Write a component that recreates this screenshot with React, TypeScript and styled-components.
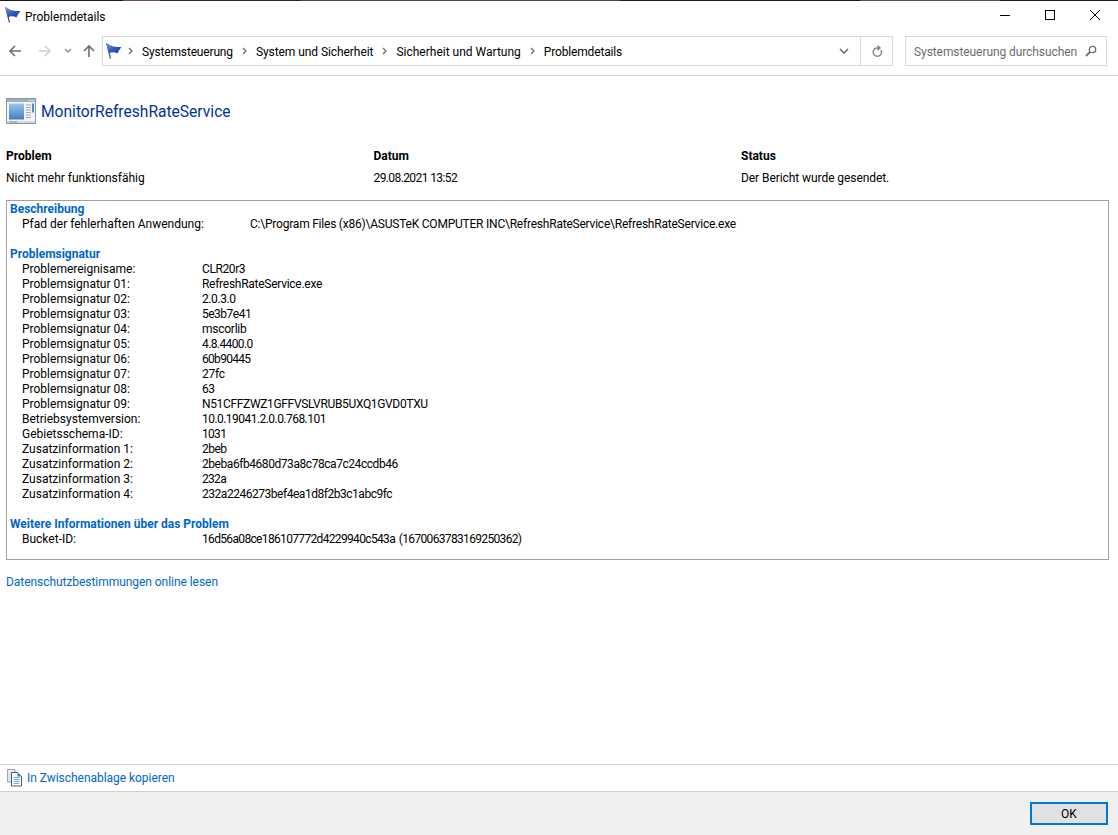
import styled, {createGlobalStyle} from 'styled-components';

const signatureRows: [string, string, number][] = [
    ['Problemereignisame:', 'CLR20r3', -0.4],
    ['Problemsignatur 01:', 'RefreshRateService.exe', -0.27],
    ['Problemsignatur 02:', '2.0.3.0', -0.4],
    ['Problemsignatur 03:', '5e3b7e41', -0.5],
    ['Problemsignatur 04:', 'mscorlib', -0.25],
    ['Problemsignatur 05:', '4.8.4400.0', -0.6],
    ['Problemsignatur 06:', '60b90445', -0.7],
    ['Problemsignatur 07:', '27fc', -0.25],
    ['Problemsignatur 08:', '63', -0.4],
    ['Problemsignatur 09:', 'N51CFFZWZ1GFFVSLVRUB5UXQ1GVD0TXU', -0.34],
    ['Betriebsystemversion:', '10.0.19041.2.0.0.768.101', -0.54],
    ['Gebietsschema-ID:', '1031', -0.7],
    ['Zusatzinformation 1:', '2beb', -0.5],
    ['Zusatzinformation 2:', '2beba6fb4680d73a8c78ca7c24ccdb46', -0.44],
    ['Zusatzinformation 3:', '232a', -0.7],
    ['Zusatzinformation 4:', '232a2246273bef4ea1d8f2b3c1abc9fc', -0.47],
];

const crumbs: [string, number][] = [
    ['Systemsteuerung', -0.16],
    ['System und Sicherheit', -0.07],
    ['Sicherheit und Wartung', 0],
    ['Problemdetails', -0.16],
];

const GlobalStyle = createGlobalStyle`
  html, body {
    margin: 0;
    padding: 0;
    background: #fff;
  }
  body {
    font-family: Roboto, "Noto Sans", "Liberation Sans", sans-serif;
    font-size: 12px;
    color: #000;
  }
  * {
    box-sizing: border-box;
  }
`;

const FlagIcon = ({id}: {id: string}) => (
    <svg width="16" height="16" viewBox="0 0 16 16">
        <defs>
            <linearGradient id={id} x1="0" y1="0" x2="1" y2="1">
                <stop offset="0" stopColor="#7f9be6" />
                <stop offset="0.5" stopColor="#3358c4" />
                <stop offset="1" stopColor="#1c3a98" />
            </linearGradient>
        </defs>
        <path d="M0.8 0.5 L4.5 15.5" stroke="#4c5a72" strokeWidth="1.3" fill="none" />
        <path d="M0.5 0.5 C3 1 5 3 8 3.5 C10 4 13 4 15.5 4 C14 6 12.5 8 11.5 10.5 C9 9.5 6 8.5 3.2 10.5 Z" fill={`url(#${id})`} />
    </svg>
);

const App = () => {
    return (
        <>
            <GlobalStyle />
            <Window>
                <TopEdge />
                <TitleBar>
                    <TitleGroup>
                        <FlagIcon id="flagTitle" />
                        <TitleText>Problemdetails</TitleText>
                    </TitleGroup>
                    <WindowButtons>
                        <WindowButton>
                            <svg width="10" height="10" viewBox="0 0 10 10"><path d="M0 5.5H10" stroke="#000" /></svg>
                        </WindowButton>
                        <WindowButton>
                            <svg width="10" height="10" viewBox="0 0 10 10"><rect x="0.5" y="0.5" width="9" height="9" fill="none" stroke="#000" /></svg>
                        </WindowButton>
                        <WindowButton>
                            <svg width="10" height="10" viewBox="0 0 10 10"><path d="M0 0L10 10M10 0L0 10" stroke="#000" /></svg>
                        </WindowButton>
                    </WindowButtons>
                </TitleBar>
                <NavBar>
                    <NavButtons>
                        <NavSlot $width={30}>
                            <svg width="14" height="14" viewBox="0 0 14 14"><path d="M13 7H2M7 2L2 7L7 12" stroke="#6d6d6d" strokeWidth="1.6" fill="none" /></svg>
                        </NavSlot>
                        <NavSlot $width={30}>
                            <svg width="14" height="14" viewBox="0 0 14 14"><path d="M1 7H12M7 2L12 7L7 12" stroke="#d0d0d0" strokeWidth="1.6" fill="none" /></svg>
                        </NavSlot>
                        <NavSlot $width={16}>
                            <svg width="8" height="6" viewBox="0 0 8 6"><path d="M1 1L4 4L7 1" stroke="#8a8a8a" strokeWidth="1.4" fill="none" /></svg>
                        </NavSlot>
                        <NavSlot $width={26}>
                            <svg width="14" height="14" viewBox="0 0 14 14"><path d="M7 13V2M2 7L7 2L12 7" stroke="#6d6d6d" strokeWidth="1.6" fill="none" /></svg>
                        </NavSlot>
                    </NavButtons>
                    <AddressBox>
                        <FlagIcon id="flagAddress" />
                        <Crumbs>
                            {crumbs.map(([crumb, tracking]) => (
                                <Crumb key={crumb}>
                                    <svg width="5" height="8" viewBox="0 0 5 8"><path d="M1 1L4 4L1 7" stroke="#707070" strokeWidth="1.3" fill="none" /></svg>
                                    <CrumbLabel $tracking={tracking}>{crumb}</CrumbLabel>
                                </Crumb>
                            ))}
                        </Crumbs>
                        <AddressAction>
                            <svg width="10" height="7" viewBox="0 0 10 7"><path d="M1 1L5 5L9 1" stroke="#707070" strokeWidth="1.6" fill="none" /></svg>
                        </AddressAction>
                        <AddressAction $divided>
                            <svg width="12" height="13" viewBox="0 0 12 13"><path d="M10 5A4.2 4.2 0 1 1 5.5 3H8.5M6.5 0.5L9 3L6.5 5" stroke="#808080" strokeWidth="1.4" fill="none" /></svg>
                        </AddressAction>
                    </AddressBox>
                    <SearchBox>
                        <SearchHint>Systemsteuerung durchsuchen</SearchHint>
                        <svg width="12" height="12" viewBox="0 0 12 12"><circle cx="7.5" cy="4.5" r="3.2" stroke="#707070" strokeWidth="1.3" fill="none" /><path d="M5 7L1 11" stroke="#707070" strokeWidth="1.8" /></svg>
                    </SearchBox>
                </NavBar>
                <Content>
                    <AppHeader>
                        <svg width="30" height="27" viewBox="0 0 30 27">
                            <defs>
                                <linearGradient id="appPanel" x1="0" y1="0" x2="0" y2="1">
                                    <stop offset="0" stopColor="#9cc6ec" />
                                    <stop offset="1" stopColor="#3f7fc0" />
                                </linearGradient>
                            </defs>
                            <rect x="0.5" y="0.5" width="29" height="25" fill="#f2f4f7" stroke="#8a94a3" />
                            <rect x="1" y="1" width="28" height="3" fill="#a3aebd" />
                            <path d="M23 2.5h1M25.5 2.5h1M27.5 2.5h1" stroke="#fff" />
                            <rect x="3" y="5.5" width="15" height="16" fill="url(#appPanel)" />
                            <path d="M20 7h5M20 9.5h5M20 12h5M20 14.5h5M20 17h5M20 19.5h5" stroke="#a2abb8" />
                            <rect x="26" y="5.5" width="2" height="9" fill="#4a8fd0" />
                            <rect x="1" y="23" width="28" height="2" fill="#d5d9df" />
                            <path d="M3 24h8" stroke="#8a94a3" />
                        </svg>
                        <AppName>MonitorRefreshRateService</AppName>
                    </AppHeader>
                    <SummaryGrid>
                        <SummaryHead>Problem</SummaryHead>
                        <SummaryHead>Datum</SummaryHead>
                        <SummaryHead>Status</SummaryHead>
                        <span>Nicht mehr funktionsfähig</span>
                        <DetailValue $tracking={-0.6}>29.08.2021 13:52</DetailValue>
                        <DetailValue $tracking={-0.07}>Der Bericht wurde gesendet.</DetailValue>
                    </SummaryGrid>
                    <DetailBox>
                        <SectionTitle>Beschreibung</SectionTitle>
                        <PathRow>
                            <span>Pfad der fehlerhaften Anwendung:</span>
                            <DetailValue $tracking={-0.22}>C:\Program Files (x86)\ASUSTeK COMPUTER INC\RefreshRateService\RefreshRateService.exe</DetailValue>
                        </PathRow>
                        <Gap />
                        <SectionTitle>Problemsignatur</SectionTitle>
                        {signatureRows.map(([label, value, tracking]) => (
                            <DetailRow key={label}>
                                <span>{label}</span>
                                <DetailValue $tracking={tracking}>{value}</DetailValue>
                            </DetailRow>
                        ))}
                        <Gap />
                        <SectionTitle>Weitere Informationen über das Problem</SectionTitle>
                        <DetailRow>
                            <span>Bucket-ID:</span>
                            <BucketValue $tracking={-0.66}>16d56a08ce186107772d4229940c543a (1670063783169250362)</BucketValue>
                        </DetailRow>
                    </DetailBox>
                    <PrivacyLink>Datenschutzbestimmungen online lesen</PrivacyLink>
                </Content>
                <CopyBar>
                    <svg width="16" height="18" viewBox="0 0 16 18">
                        <path d="M0.5 0.5H8V13H0.5Z" fill="#e3e6eb" stroke="#9aa3b0" />
                        <path d="M4.5 3.5H10.5L14.5 7.5V17H4.5Z" fill="#fff" stroke="#48587a" />
                        <path d="M10.5 3.5V7.5H14.5Z" fill="#3f7fc0" />
                        <path d="M6.5 8.5H12.5M6.5 10.5H12.5M6.5 12.5H12.5M6.5 14.5H12.5" stroke="#6fb2ea" />
                    </svg>
                    <CopyLink>In Zwischenablage kopieren</CopyLink>
                </CopyBar>
                <Footer>
                    <OkButton>OK</OkButton>
                </Footer>
            </Window>
        </>
    );
};

export default App;

const Window = styled.div`
  display: flex;
  flex-direction: column;
  width: 1118px;
  height: 835px;
  overflow: hidden;
  background: #fff;
`;

const TopEdge = styled.div`
  height: 1px;
  flex-shrink: 0;
  background: linear-gradient(90deg, #1c1c1c 0 123px, #6b5148 123px 160px, #2a2320 160px 300px, #4a4a4a 300px 620px, #24181e 620px 860px, #555 860px 1000px, #1c1c1c 1000px);
`;

const TitleBar = styled.div`
  display: flex;
  align-items: flex-start;
  justify-content: space-between;
  height: 30px;
  flex-shrink: 0;
`;

const TitleGroup = styled.div`
  display: flex;
  align-items: center;
  gap: 4px;
  height: 28px;
  padding-left: 5px;
`;

const TitleText = styled.span`
  padding-top: 4px;
  font-size: 12px;
`;

const WindowButtons = styled.div`
  display: flex;
  padding-right: 1px;
`;

const WindowButton = styled.div`
  display: flex;
  align-items: center;
  justify-content: center;
  width: 45px;
  height: 28px;
`;

const NavBar = styled.div`
  display: flex;
  align-items: center;
  height: 45px;
  flex-shrink: 0;
  padding: 0 11px 4px 0;
  border-bottom: 1px solid #d0d0d0;
`;

const NavButtons = styled.div`
  display: flex;
  align-items: center;
  flex-shrink: 0;
`;

const NavSlot = styled.div<{$width: number}>`
  display: flex;
  align-items: center;
  justify-content: center;
  width: ${({$width}) => $width}px;
`;

const AddressBox = styled.div`
  display: flex;
  align-items: center;
  width: 791px;
  height: 30px;
  padding-left: 3px;
  border: 1px solid #d9d9d9;
`;

const Crumbs = styled.div`
  display: flex;
  flex: 1;
  margin-left: 6px;
`;

const Crumb = styled.div`
  display: flex;
  align-items: center;
  gap: 9px;
  margin-right: 9px;
  font-size: 12px;
`;

const CrumbLabel = styled.span<{$tracking: number}>`
  padding-top: 2px;
  letter-spacing: ${({$tracking}) => $tracking}px;
`;

const AddressAction = styled.div<{$divided?: boolean}>`
  display: flex;
  align-items: center;
  justify-content: center;
  width: 32px;
  height: 100%;
  ${({$divided}) => $divided && 'border-left: 1px solid #d9d9d9;'}
`;

const SearchBox = styled.div`
  display: flex;
  align-items: center;
  justify-content: space-between;
  width: 202px;
  height: 30px;
  margin-left: 12px;
  padding: 0 9px 0 8px;
  border: 1px solid #d9d9d9;
  color: #6d6d6d;
  white-space: nowrap;
`;

const SearchHint = styled.span`
  padding-top: 2px;
  letter-spacing: -0.08px;
`;

const Content = styled.div`
  flex: 1;
  padding: 0 8px 0 6px;
`;

const AppHeader = styled.div`
  display: flex;
  align-items: center;
  gap: 5px;
  height: 30px;
  margin-top: 20px;
`;

const AppName = styled.h1`
  margin: 0;
  padding-top: 2px;
  font-size: 15.6px;
  font-weight: 400;
  color: #003399;
`;

const SummaryGrid = styled.div`
  display: grid;
  grid-template-columns: 367.5px 367.5px 1fr;
  grid-auto-rows: 22px;
  align-items: center;
  margin-top: 19px;
`;

const SummaryHead = styled.span`
  font-weight: 700;
`;

const DetailBox = styled.div`
  margin-top: 11px;
  margin-right: 1px;
  height: 360px;
  padding: 1px 3px 0;
  border: 1px solid #a0a0a0;
  line-height: 15px;
`;

const SectionTitle = styled.div`
  font-weight: 700;
  color: #0066cc;
`;

const DetailRow = styled.div`
  display: grid;
  grid-template-columns: 180px 1fr;
  padding-left: 12px;
`;

const PathRow = styled(DetailRow)`
  grid-template-columns: 228px 1fr;
`;

const DetailValue = styled.span<{$tracking: number}>`
  letter-spacing: ${({$tracking}) => $tracking}px;
`;

const BucketValue = styled(DetailValue)`
  word-spacing: 1.5px;
`;

const Gap = styled.div`
  height: 15px;
`;

const PrivacyLink = styled.a`
  display: block;
  margin-top: 15px;
  letter-spacing: -0.05px;
  color: #0066cc;
`;

const CopyBar = styled.div`
  display: flex;
  align-items: center;
  gap: 4px;
  height: 28px;
  flex-shrink: 0;
  padding-left: 7px;
  border-top: 1px solid #d0d0d0;
  border-bottom: 1px solid #d0d0d0;
`;

const CopyLink = styled.a`
  letter-spacing: -0.04px;
  color: #0066cc;
`;

const Footer = styled.div`
  display: flex;
  align-items: center;
  justify-content: flex-end;
  flex: 0 0 43px;
  padding: 0 10px 0 0;
  background: #f0f0f0;
`;

const OkButton = styled.button`
  width: 78px;
  height: 23px;
  padding: 0;
  border: 2px solid #0078d7;
  background: #e1e1e1;
  color: #000;
  font-family: inherit;
  font-size: 12px;
`;
